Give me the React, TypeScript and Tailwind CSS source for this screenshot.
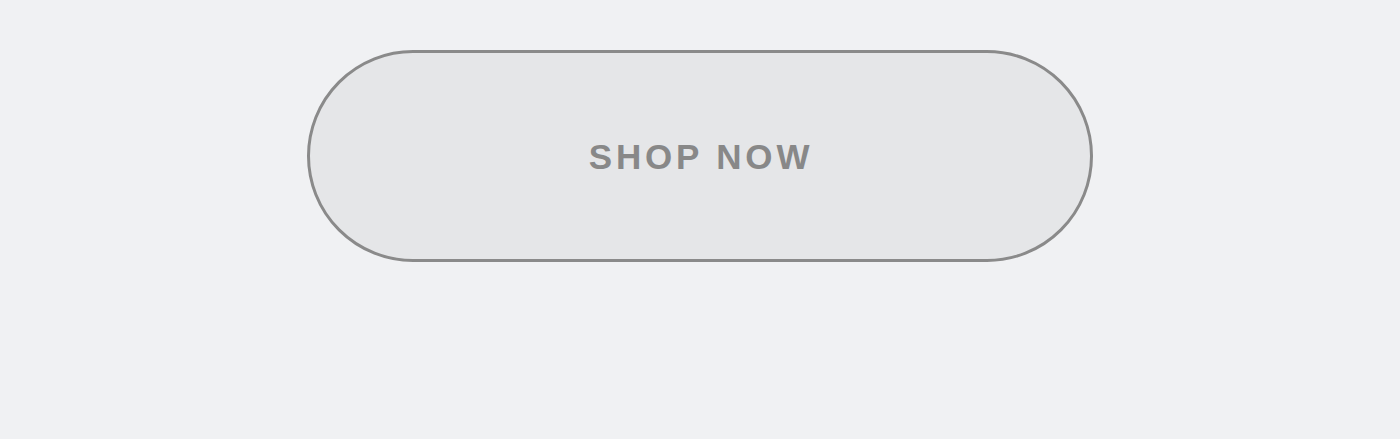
export default function App() {
  return (
    <div className="min-h-[439px] w-full bg-[#f0f1f3] flex justify-center pt-[50px]">
      <button
        type="button"
        className="w-[786px] h-[212px] rounded-full border-[3px] border-[#8a8a8a] bg-[#e5e6e8] flex items-center justify-center"
      >
        <span
          className="text-[35px] font-bold tracking-[0.11em] text-[#888888] leading-none pl-[2px]"
          style={{ fontFamily: '"Liberation Sans", Arial, sans-serif' }}
        >
          SHOP NOW
        </span>
      </button>
    </div>
  );
}
